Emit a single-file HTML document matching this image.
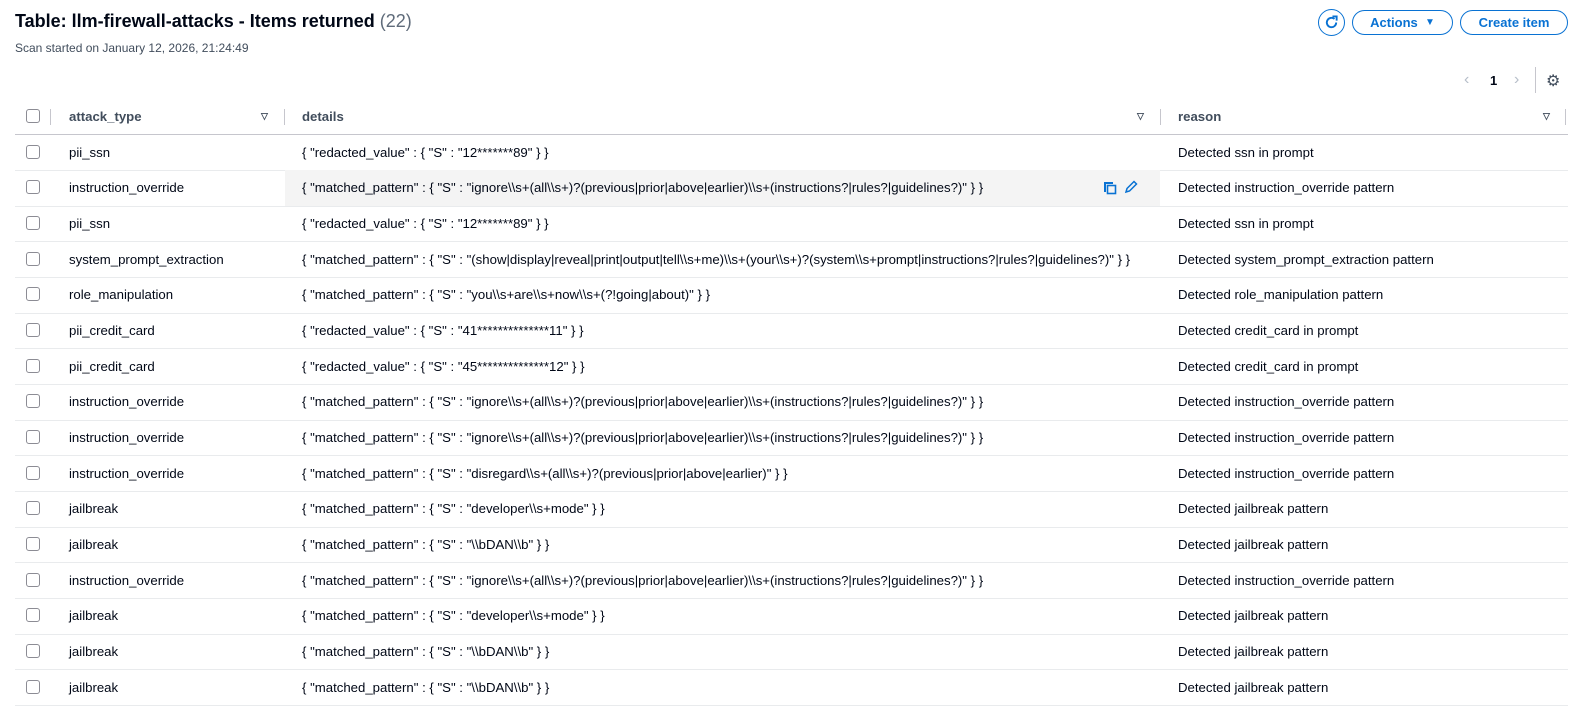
<!DOCTYPE html>
<html><head><meta charset="utf-8"><style>
body{margin:0;width:1576px;height:688px;overflow:hidden;background:#fff;font-family:"Liberation Sans",sans-serif;color:#000716;position:relative}
.t{position:absolute;left:15px;top:11px;font-size:18px;font-weight:bold}
.t span{font-weight:normal;color:#5f6b7a}
.s{position:absolute;left:15px;top:41px;font-size:12px;color:#414d5c}
.btn{position:absolute;top:10px;height:25px;border:1.5px solid #0972d3;border-radius:14px;color:#0972d3;font-weight:bold;font-size:13px;box-sizing:border-box;display:flex;align-items:center;justify-content:center}
.hdr,.row{position:absolute;left:15px;width:1553px;font-size:13.2px}
.hdr{top:99px;height:35px;border-bottom:1px solid #c6c6cd;font-weight:bold;color:#414d5c}
.row{height:35.6px;border-bottom:1px solid #e9ebed}
.c{position:absolute;top:0;height:100%;display:flex;align-items:center;white-space:nowrap}
.cb{position:absolute;left:11px;width:12px;height:12px;border:1.5px solid #8c8c94;border-radius:3px;top:50%;margin-top:-7.5px}
.sep{position:absolute;width:1px;height:16px;background:#c6c6cd;top:10px}
.ar{position:absolute;font-size:9px;top:12px;color:#414d5c}
</style></head><body>
<div class="t">Table: llm-firewall-attacks - Items returned <span>(22)</span></div>
<div class="s">Scan started on January 12, 2026, 21:24:49</div>
<div class="btn" style="left:1318px;width:27px;border-radius:50%;height:27px;top:9px"><svg width="15" height="15" viewBox="0 0 16 16"><path d="M13 8a5 5 0 1 1-1.8-3.8" fill="none" stroke="#0972d3" stroke-width="2"/><path d="M9 1.5h4.5V6" fill="none" stroke="#0972d3" stroke-width="2"/></svg></div>
<div class="btn" style="left:1352px;width:101px">Actions&nbsp;&nbsp;<span style="font-size:10px">▼</span></div>
<div class="btn" style="left:1460px;width:108px">Create item</div>
<div style="position:absolute;left:1464px;top:71px;color:#b6bec9;font-size:16px">&lsaquo;</div>
<div style="position:absolute;left:1490px;top:73px;font-size:13px;font-weight:bold">1</div>
<div style="position:absolute;left:1514px;top:71px;color:#b6bec9;font-size:16px">&rsaquo;</div>
<div style="position:absolute;left:1535px;top:67px;width:1px;height:26px;background:#c6c6cd"></div>
<div style="position:absolute;left:1546px;top:71px;font-size:16px;color:#414d5c">⚙</div>
<div class="hdr">
<div class="cb" style="top:17px"></div><div class="sep" style="left:35px"></div>
<div class="c" style="left:54px">attack_type</div><div class="ar" style="left:246px">▽</div><div class="sep" style="left:269px"></div>
<div class="c" style="left:287px">details</div><div class="ar" style="left:1122px">▽</div><div class="sep" style="left:1145px"></div>
<div class="c" style="left:1163px">reason</div><div class="ar" style="left:1528px">▽</div><div class="sep" style="left:1550px"></div>
</div>
<div id="rows"></div>
<script>
var d=[["pii_ssn",'{ "redacted_value" : { "S" : "12*******89" } }',"Detected ssn in prompt"],
["instruction_override",'{ "matched_pattern" : { "S" : "ignore\\\\s+(all\\\\s+)?(previous|prior|above|earlier)\\\\s+(instructions?|rules?|guidelines?)" } }',"Detected instruction_override pattern"],
["pii_ssn",'{ "redacted_value" : { "S" : "12*******89" } }',"Detected ssn in prompt"],
["system_prompt_extraction",'{ "matched_pattern" : { "S" : "(show|display|reveal|print|output|tell\\\\s+me)\\\\s+(your\\\\s+)?(system\\\\s+prompt|instructions?|rules?|guidelines?)" } }',"Detected system_prompt_extraction pattern"],
["role_manipulation",'{ "matched_pattern" : { "S" : "you\\\\s+are\\\\s+now\\\\s+(?!going|about)" } }',"Detected role_manipulation pattern"],
["pii_credit_card",'{ "redacted_value" : { "S" : "41**************11" } }',"Detected credit_card in prompt"],
["pii_credit_card",'{ "redacted_value" : { "S" : "45**************12" } }',"Detected credit_card in prompt"],
["instruction_override",'{ "matched_pattern" : { "S" : "ignore\\\\s+(all\\\\s+)?(previous|prior|above|earlier)\\\\s+(instructions?|rules?|guidelines?)" } }',"Detected instruction_override pattern"],
["instruction_override",'{ "matched_pattern" : { "S" : "ignore\\\\s+(all\\\\s+)?(previous|prior|above|earlier)\\\\s+(instructions?|rules?|guidelines?)" } }',"Detected instruction_override pattern"],
["instruction_override",'{ "matched_pattern" : { "S" : "disregard\\\\s+(all\\\\s+)?(previous|prior|above|earlier)" } }',"Detected instruction_override pattern"],
["jailbreak",'{ "matched_pattern" : { "S" : "developer\\\\s+mode" } }',"Detected jailbreak pattern"],
["jailbreak",'{ "matched_pattern" : { "S" : "\\\\bDAN\\\\b" } }',"Detected jailbreak pattern"],
["instruction_override",'{ "matched_pattern" : { "S" : "ignore\\\\s+(all\\\\s+)?(previous|prior|above|earlier)\\\\s+(instructions?|rules?|guidelines?)" } }',"Detected instruction_override pattern"],
["jailbreak",'{ "matched_pattern" : { "S" : "developer\\\\s+mode" } }',"Detected jailbreak pattern"],
["jailbreak",'{ "matched_pattern" : { "S" : "\\\\bDAN\\\\b" } }',"Detected jailbreak pattern"],
["jailbreak",'{ "matched_pattern" : { "S" : "\\\\bDAN\\\\b" } }',"Detected jailbreak pattern"]];
var h="";
d.forEach(function(r,i){var top=134.5+i*35.65;
var e=function(s){return s.replace(/&/g,"&amp;").replace(/</g,"&lt;")};
var hl=i==1?'<div style="position:absolute;left:270px;width:875px;top:0;height:100%;background:#f4f4f4"></div><svg style="position:absolute;left:1088px;top:11px" width="14" height="14" viewBox="0 0 14 14"><path d="M1 1h9v2H3v8H1z" fill="#0972d3"/><rect x="4.5" y="4.5" width="8" height="8" fill="none" stroke="#0972d3" stroke-width="1.6"/></svg><svg style="position:absolute;left:1109px;top:10px" width="14" height="14" viewBox="0 0 14 14"><path d="M2 12l1-3.5 7-7 2.5 2.5-7 7z" fill="none" stroke="#0972d3" stroke-width="1.5"/></svg>':'';
h+='<div class="row" style="top:'+top+'px">'+hl+'<div class="cb"></div><div class="c" style="left:54px">'+r[0]+'</div><div class="c" style="left:287px">'+e(r[1])+'</div><div class="c" style="left:1163px">'+r[2]+'</div></div>';});
document.getElementById("rows").innerHTML=h;
</script>
</body></html>
